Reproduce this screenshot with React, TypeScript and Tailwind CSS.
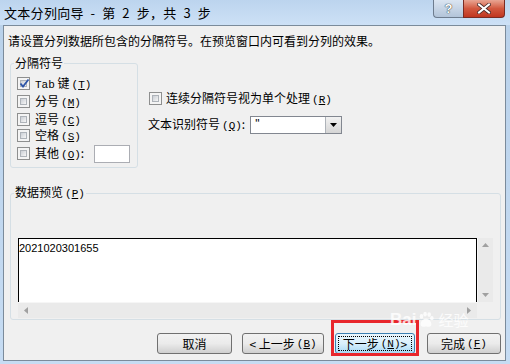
import React from "react";

const CJK = { fontFamily: '"Noto Sans CJK SC", "Noto Sans", sans-serif' };

function Check({ checked }: { checked?: boolean }) {
  return (
    <span className="w-[13px] h-[13px] border border-[#8e8f8f] bg-[#f4f4f4] p-[2px] flex shrink-0">
      <span className="flex-1 border border-[#aeb3b9] bg-gradient-to-br from-[#cbcfd5] to-[#f6f6f6] relative">
        {checked && (
          <svg className="absolute left-[-2px] top-[-3px]" width="11" height="11" viewBox="0 0 11 11">
            <path d="M1.5 5.5 L4 8.5 L9.5 1.5" stroke="#2d55a8" strokeWidth="1.8" fill="none" />
          </svg>
        )}
      </span>
    </span>
  );
}

function Mn({ k }: { k: string }) {
  return (
    <span className="ml-[2px] text-[11px]" style={{ fontFamily: '"Liberation Mono", monospace' }}>
      (<span className="underline">{k}</span>)
    </span>
  );
}

function Btn({ children, focused, w, ml }: { children: React.ReactNode; focused?: boolean; w: string; ml: string }) {
  return (
    <div
      className={`${w} ${ml} h-[21px] rounded-[3px] border flex items-center justify-center p-[2px] ${
        focused
          ? "border-[#3c7fb1] bg-gradient-to-b from-[#eaf6fd] via-[#d9f0fc] to-[#a7d9f5]"
          : "border-[#707070] bg-gradient-to-b from-[#f2f2f2] via-[#ebebeb] to-[#cfcfcf]"
      }`}
    >
      <div
        className={`w-full h-full flex items-center justify-center text-[12px] leading-[14px] text-black ${
          focused ? "border border-dotted border-black" : ""
        }`}
      >
        {children}
      </div>
    </div>
  );
}

export default function App() {
  return (
    <div className="w-[510px] h-[364px] bg-gradient-to-b from-[#b9d1ea] to-[#c6dcf3] relative overflow-hidden" style={CJK}>
      {/* Title bar */}
      <div className="h-[25px] flex items-start bg-gradient-to-b from-[#bcd4ee] to-[#cde1f6]">
        <div className="pl-[4px] pt-[4px] text-[13px] leading-[17px] text-black flex-1 tracking-[0.3px] whitespace-pre">
          文本分列向导{"\u2002-\u2002"}第{"\u20022\u2002"}步，共{"\u20023\u2002"}步
        </div>
        <div className="flex mr-[5px]">
          <div className="w-[30px] h-[18px] rounded-bl-[4px] border border-[#6d7c8e] border-t-0 border-r-0 bg-gradient-to-b from-[#dbe5f1] to-[#b2c4d9] flex items-center justify-center text-[13px] font-bold text-white" style={{ fontFamily: '"Liberation Sans", sans-serif', textShadow: "0 0 1px #233, 0 0 1px #233" }}>?</div>
          <div className="w-[42px] h-[18px] rounded-br-[4px] border border-[#7a2b22] border-t-0 bg-gradient-to-b from-[#e8a593] via-[#d2583f] to-[#c0351f] flex items-center justify-center">
            <svg width="14" height="11" viewBox="0 0 14 11">
              <path d="M2 1.5 L12 9.5 M12 1.5 L2 9.5" stroke="#4a2a28" strokeWidth="3.6" strokeLinecap="square" />
              <path d="M2 1.5 L12 9.5 M12 1.5 L2 9.5" stroke="#ffffff" strokeWidth="2" strokeLinecap="square" />
            </svg>
          </div>
        </div>
      </div>

      {/* Client */}
      <div className="ml-[3px] w-[503px] h-[336px] border border-[#7b8b9b] bg-[#f0f0f0] flex flex-col text-[12px] text-black">
        <div className="mt-[7px] pl-[4px] leading-[16px]">请设置分列数据所包含的分隔符号。在预览窗口内可看到分列的效果。</div>

        <div className="flex mt-[6px]">
          <fieldset className="ml-[6px] w-[128px] h-[113px] border border-[#d5dfe5] rounded-[3px]">
            <legend className="ml-[3px] px-[1px] leading-[16px]">分隔符号</legend>
            <div className="pt-[6px] pl-[6px] flex flex-col">
              <div className="flex items-center h-[13px] mb-[5px]">
                <Check checked />
                <span className="ml-[5px] leading-[13px]"><span className="text-[11px]" style={{ fontFamily: '"Liberation Mono", monospace' }}>Tab</span> 键<Mn k="T" /></span>
              </div>
              <div className="flex items-center h-[13px] mb-[5px]">
                <Check />
                <span className="ml-[5px] leading-[13px]">分号<Mn k="M" /></span>
              </div>
              <div className="flex items-center h-[13px] mb-[3px]">
                <Check />
                <span className="ml-[5px] leading-[13px]">逗号<Mn k="C" /></span>
              </div>
              <div className="flex items-center h-[13px] mb-[5px]">
                <Check />
                <span className="ml-[5px] leading-[13px]">空格<Mn k="S" /></span>
              </div>
              <div className="flex items-center h-[13px]">
                <Check />
                <span className="ml-[5px] leading-[13px]">其他<Mn k="O" />:</span>
                <div className="ml-[10px] w-[36px] h-[18px] border border-[#abadb3] bg-white shrink-0" />
              </div>
            </div>
          </fieldset>

          <div className="ml-[10px] flex flex-col">
            <div className="mt-[37px] flex items-center h-[13px] ml-[1px]">
              <Check />
              <span className="ml-[4px] leading-[13px]">连续分隔符号视为单个处理<Mn k="R" /></span>
            </div>
            <div className="mt-[11px] flex items-center h-[18px]">
              <span className="leading-[16px]">文本识别符号<Mn k="Q" />:</span>
              <div className="ml-[5px] w-[92px] h-[18px] border border-[#828790] bg-white flex">
                <div className="flex-1 pl-[4px] leading-[14px] text-[12px]" style={{ fontFamily: '"Liberation Sans", sans-serif' }}>"</div>
                <div className="w-[16px] h-full border-l border-[#aeb3b9] bg-gradient-to-b from-[#f2f2f2] to-[#d5d5d5] flex items-center justify-center">
                  <svg width="7" height="4" viewBox="0 0 7 4"><path d="M0 0 H7 L3.5 4 Z" fill="#000" /></svg>
                </div>
              </div>
            </div>
          </div>
        </div>

        <fieldset className="mt-[16px] ml-[6px] w-[491px] h-[136px] border border-[#d5dfe5] rounded-[3px]">
          <legend className="ml-[3px] px-[1px] leading-[16px]">数据预览<Mn k="P" /></legend>
          <div className="pt-[36px] pl-[7px] flex flex-col">
            <div className="flex">
              <div className="w-[459px] h-[64px] border border-black border-b-0 bg-white">
                <div className="text-[11px] leading-[16px] pt-[1px]" style={{ fontFamily: '"Liberation Sans", sans-serif' }}>2021020301655</div>
              </div>
              <div className="w-[16px] h-[64px] bg-[#eaeaea] border-l border-[#f6f6f6] flex flex-col items-center justify-between py-[5px]">
                <svg width="7" height="4" viewBox="0 0 7 4"><path d="M0 4 H7 L3.5 0 Z" fill="#a0a0a0" /></svg>
                <svg width="7" height="4" viewBox="0 0 7 4"><path d="M0 0 H7 L3.5 4 Z" fill="#a0a0a0" /></svg>
              </div>
            </div>
            <div className="flex">
              <div className="w-[459px] h-[16px] bg-[#eaeaea] border-t border-[#f6f6f6] flex items-center justify-between px-[6px]">
                <svg width="4" height="7" viewBox="0 0 4 7"><path d="M4 0 V7 L0 3.5 Z" fill="#a0a0a0" /></svg>
                <svg width="4" height="7" viewBox="0 0 4 7"><path d="M0 0 V7 L4 3.5 Z" fill="#a0a0a0" /></svg>
              </div>
              <div className="w-[16px] h-[16px] bg-[#f0f0f0]" />
            </div>
          </div>
        </fieldset>

        <div className="mt-[13px] flex">
          <Btn w="w-[75px]" ml="ml-[153px]">取消</Btn>
          <Btn w="w-[82px]" ml="ml-[10px]">&lt; 上一步<Mn k="B" /></Btn>
          <Btn w="w-[80px]" ml="ml-[11px]" focused>下一步<Mn k="N" /> &gt;</Btn>
          <Btn w="w-[74px]" ml="ml-[12px]">完成<Mn k="F" /></Btn>
        </div>
      </div>

      {/* red highlight */}
      <div className="absolute left-[331px] top-[320px] w-[88px] h-[36px] border-[3px] border-[#e8262c]" />

      {/* watermark */}
      <div className="absolute left-[390px] top-[310px] flex items-center text-white/80 pointer-events-none">
        <span className="text-[17px] font-bold leading-[20px]" style={{ fontFamily: '"Liberation Sans", sans-serif' }}>Bai</span>
        <svg width="18" height="18" viewBox="0 0 20 20" className="mx-[1px]">
          <g fill="rgba(255,255,255,0.8)">
            <ellipse cx="5" cy="6" rx="2" ry="2.6" />
            <ellipse cx="9" cy="3.5" rx="2" ry="2.6" />
            <ellipse cx="13.5" cy="4" rx="2" ry="2.6" />
            <ellipse cx="16.5" cy="8" rx="2" ry="2.4" />
            <path d="M4 15 C4 10 8 8.5 10 8.5 C13 8.5 16 11 16 15 C16 18 12 18 10 17 C8 18 4 18 4 15 Z" />
          </g>
        </svg>
        <span className="text-[15px] leading-[20px] ml-[2px]">经验</span>
      </div>
    </div>
  );
}
